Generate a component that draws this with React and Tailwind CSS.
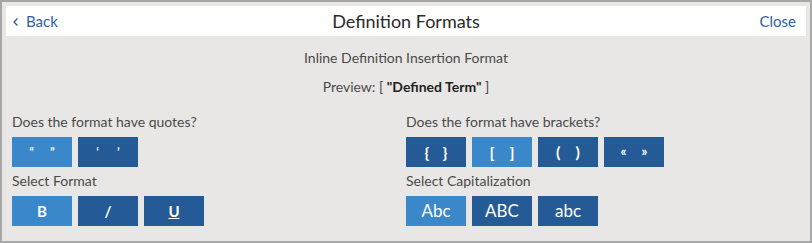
import React, { useState } from 'react';

const light = 'bg-[#3a87c9]';
const dark = 'bg-[#245a96]';

function Btn({ active, onClick, children, className = '' }) {
  return (
    <button
      onClick={onClick}
      className={`w-[60px] h-[30px] flex items-center justify-center text-white ${active ? light : dark} ${className}`}
    >
      {children}
    </button>
  );
}

function Pair({ l, r, className = '' }) {
  return (
    <span className={`flex items-center ${className}`}>
      <span>{l}</span>
      <span>{r}</span>
    </span>
  );
}

export default function App() {
  const [quotes, setQuotes] = useState('double');
  const [brackets, setBrackets] = useState('square');
  const [format, setFormat] = useState('bold');
  const [caps, setCaps] = useState('title');

  return (
    <div className="w-[812px] h-[243px] border-2 border-[#a7a7a7] bg-[#e8e7e5] p-1 font-['Lato','Liberation_Sans',sans-serif] text-[#4a4a4a]">
      <div className="h-[30px] bg-white flex items-center justify-between px-[6px] relative">
        <button className="flex items-center gap-[6px] text-[#2f62a3] text-[15px]">
          <svg width="8" height="10" viewBox="0 0 8 10" className="mt-[1px]">
            <path d="M5.5 1.5 L2 5 L5.5 8.5" stroke="#2f62a3" strokeWidth="1.4" fill="none" />
          </svg>
          <span>Back</span>
        </button>
        <div className="absolute left-1/2 -translate-x-1/2 text-[18px] text-[#2a2a2a]">Definition Formats</div>
        <button className="text-[#2f62a3] text-[15px] mr-[4px]">Close</button>
      </div>

      <div className="px-[6px]">
        <div className="mt-3 h-5 leading-5 text-center text-[14px]">Inline Definition Insertion Format</div>
        <div className="mt-[9px] h-5 leading-5 text-center text-[14px]">
          Preview: [ <span className="font-bold text-[#222]">"Defined Term"</span> ]
        </div>

        <div className="grid grid-cols-2 mt-[15px]">
          <div>
            <div className="h-5 leading-5 text-[14px]">Does the format have quotes?</div>
            <div className="flex gap-[6px] mt-[5px]">
              <Btn active={quotes === 'double'} onClick={() => setQuotes('double')}>
                <Pair l="“" r="”" className="text-[12px] font-bold gap-[16px]" />
              </Btn>
              <Btn active={quotes === 'single'} onClick={() => setQuotes('single')}>
                <Pair l="‘" r="’" className="text-[12px] font-bold gap-[18px]" />
              </Btn>
            </div>
            <div className="mt-[4px] h-5 leading-5 text-[14px]">Select Format</div>
            <div className="flex gap-[6px] mt-[5px]">
              <Btn active={format === 'bold'} onClick={() => setFormat('bold')} className="font-bold text-[15px]">B</Btn>
              <Btn active={format === 'italic'} onClick={() => setFormat('italic')} className="font-bold text-[15px]">/</Btn>
              <Btn active={format === 'underline'} onClick={() => setFormat('underline')} className="font-bold text-[15px] underline">U</Btn>
            </div>
          </div>

          <div>
            <div className="h-5 leading-5 text-[14px]">Does the format have brackets?</div>
            <div className="flex gap-[6px] mt-[5px]">
              <Btn active={brackets === 'curly'} onClick={() => setBrackets('curly')}>
                <Pair l="{" r="}" className="text-[16px] font-bold gap-[13px]" />
              </Btn>
              <Btn active={brackets === 'square'} onClick={() => setBrackets('square')}>
                <Pair l="[" r="]" className="text-[16px] font-bold gap-[15px]" />
              </Btn>
              <Btn active={brackets === 'round'} onClick={() => setBrackets('round')}>
                <Pair l="(" r=")" className="text-[16px] font-bold gap-[15px]" />
              </Btn>
              <Btn active={brackets === 'angle'} onClick={() => setBrackets('angle')}>
                <Pair l="«" r="»" className="text-[13px] font-bold gap-[15px]" />
              </Btn>
            </div>
            <div className="mt-[4px] h-5 leading-5 text-[14px]">Select Capitalization</div>
            <div className="flex gap-[6px] mt-[5px]">
              <Btn active={caps === 'title'} onClick={() => setCaps('title')} className="text-[17px]">Abc</Btn>
              <Btn active={caps === 'upper'} onClick={() => setCaps('upper')} className="text-[17px]">ABC</Btn>
              <Btn active={caps === 'lower'} onClick={() => setCaps('lower')} className="text-[17px]">abc</Btn>
            </div>
          </div>
        </div>
      </div>
    </div>
  );
}
